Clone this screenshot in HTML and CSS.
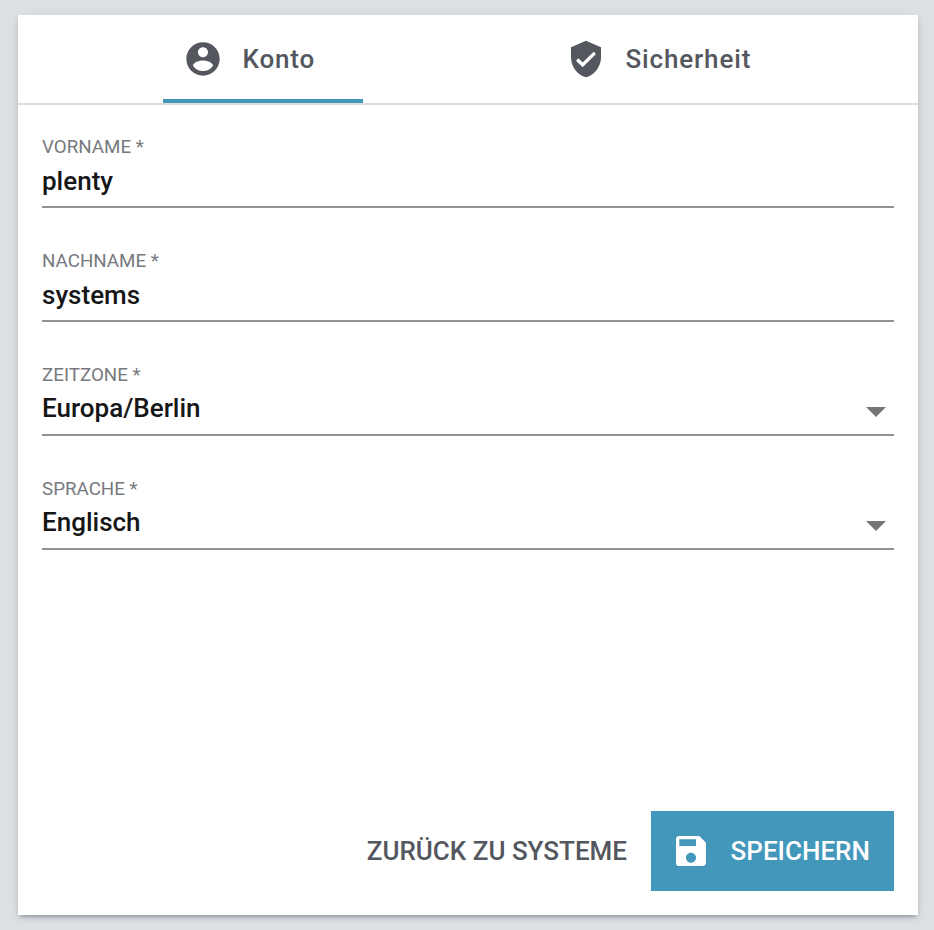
FILE: index.html
```html
<!DOCTYPE html>
<html lang="de">
<head>
<meta charset="utf-8">
<title>Konto</title>
<link rel="stylesheet" href="styles.css">
</head>
<body>
<main class="card">
  <nav class="tabs">
    <a class="tab tab-active">
      <svg class="tab-icon" viewBox="0 0 24 24"><path d="M12 2C6.480 2 2 6.480 2 12s4.480 10 10 10 10-4.480 10-10S17.520 2 12 2zm0 3c1.660 0 3 1.340 3 3s-1.340 3-3 3-3-1.340-3-3 1.340-3 3-3zm0 14.200c-2.500 0-4.710-1.280-6-3.220.03-1.990 4-3.080 6-3.080 1.990 0 5.970 1.090 6 3.080-1.290 1.940-3.500 3.220-6 3.220z"/></svg>
      <span>Konto</span>
    </a>
    <a class="tab">
      <svg class="tab-icon" viewBox="0 0 24 24"><path d="M12 1L3 5v6c0 5.550 3.840 10.740 9 12 5.160-1.260 9-6.450 9-12V5l-9-4zm-2 16l-4-4 1.410-1.410L10 14.170l6.590-6.590L18 9l-8 8z"/></svg>
      <span>Sicherheit</span>
    </a>
  </nav>
  <form class="form">
    <div class="field"><span class="label">VORNAME *</span><span class="value">plenty</span></div>
    <div class="field"><span class="label">NACHNAME *</span><span class="value">systems</span></div>
    <div class="field select"><span class="label">ZEITZONE *</span><span class="value">Europa/Berlin<i class="arrow"></i></span></div>
    <div class="field select"><span class="label">SPRACHE *</span><span class="value">Englisch<i class="arrow"></i></span></div>
  </form>
  <footer class="actions">
    <span class="back">ZURÜCK ZU SYSTEME</span>
    <span class="save">
      <svg class="save-icon" viewBox="0 0 24 24"><path d="M17 3H5a2 2 0 0 0-2 2v14a2 2 0 0 0 2 2h14c1.100 0 2-.9 2-2V7l-4-4zm-5 16c-1.660 0-3-1.340-3-3s1.340-3 3-3 3 1.340 3 3-1.340 3-3 3zm3-10H5V5h10v4z"/></svg>
      <span>SPEICHERN</span>
    </span>
  </footer>
</main>
</body>
</html>
```
FILE: styles.css
```css
* { box-sizing: border-box; }
body {
  margin: 0;
  height: 930px;
  padding: 15px 16px 15px 18px;
  background: #dde1e6;
  font-family: Roboto, sans-serif;
  font-weight: 500;
  overflow: hidden;
}
.card {
  height: 900px;
  display: flex;
  flex-direction: column;
  background: #fff;
  box-shadow: 0 6px 2px -4px rgba(0, 0, 0, .12), 0 3px 4px rgba(0, 0, 0, .12), 0 2px 10px rgba(0, 0, 0, .1);
}
.tabs {
  height: 90px;
  display: flex;
  padding-left: 145px;
  gap: 183px;
  border-bottom: 2px solid #dedede;
  color: #54575e;
}
.tab {
  width: 200px;
  display: flex;
  align-items: center;
  padding: 4px 0 0 19.5px;
  gap: 20px;
  font-size: 26px;
  letter-spacing: .85px;
  border-bottom: 4px solid transparent;
}
.tab-active { border-color: #4297bb; }
.tab-icon { width: 40px; height: 40px; fill: currentColor; flex: none; }
.form { flex: 1; padding: 0 24px; }
.field {
  height: 114px;
  padding-top: 31px;
  display: flex;
  flex-direction: column;
}
.label {
  font-size: 18.75px;
  line-height: 22px;
  font-weight: 400;
  color: #77797e;
}
.value {
  height: 50px;
  display: flex;
  justify-content: space-between;
  padding-top: 8px;
  font-size: 26px;
  line-height: 30px;
  color: #151618;
  border-bottom: 2px solid #929294;
}
.select .value { padding-top: 7px; }
.arrow {
  margin: 14px 8px 0 0;
  width: 20px;
  height: 10px;
  background: #757575;
  clip-path: polygon(0 0, 100% 0, 50% 100%);
}
.actions {
  display: flex;
  justify-content: flex-end;
  align-items: center;
  padding: 0 24px 24px;
  gap: 24px;
  font-size: 26px;
}
.back { color: #54575e; }
.save {
  width: 243px;
  height: 80px;
  display: flex;
  align-items: center;
  padding-left: 19.6px;
  gap: 20px;
  background: #4297bb;
  color: #fff;
}
.save-icon { width: 40px; height: 40px; fill: currentColor; flex: none; }
```
